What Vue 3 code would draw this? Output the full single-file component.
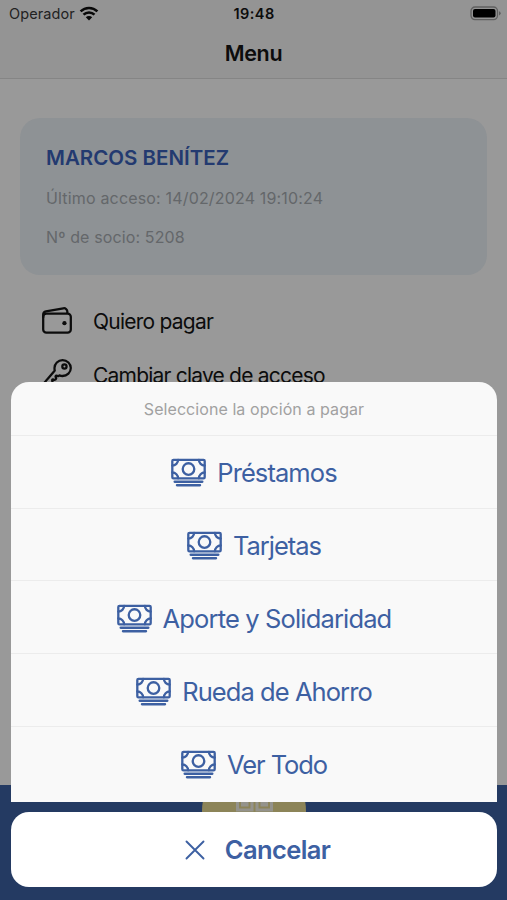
<script setup>
const options = [
  { label: 'Préstamos', key: 'loans' },
  { label: 'Tarjetas', key: 'cards' },
  { label: 'Aporte y Solidaridad', key: 'contribution' },
  { label: 'Rueda de Ahorro', key: 'savings' },
  { label: 'Ver Todo', key: 'all' },
]
</script>

<template>
  <div class="screen">
    <header class="header">
      <div class="status">
        <div class="carrier">
          <span class="carrier-name">Operador</span>
          <svg class="wifi" viewBox="0 0 20 15">
            <path d="M1.6 5.4a12 12 0 0 1 16.8 0M4.5 8.7a7.8 7.8 0 0 1 11 0" fill="none" stroke="currentColor" stroke-width="2.5" />
            <path d="M10 14.6l-3.2-3.4a4.6 4.6 0 0 1 6.4 0z" fill="currentColor" />
          </svg>
        </div>
        <span class="clock">19:48</span>
        <svg class="battery" viewBox="0 0 32 15">
          <rect x="1" y="1" width="26.5" height="12.6" rx="4" fill="none" stroke="#606060" stroke-width="1.3" />
          <rect x="3" y="3" width="22.5" height="8.6" rx="2" fill="#000" />
          <path d="M29 5.2q1.7.6 1.7 2.1T29 9.4z" fill="#606060" />
        </svg>
      </div>
      <h1 class="title">Menu</h1>
    </header>

    <main class="content">
      <section class="card">
        <h2 class="name">MARCOS BENÍTEZ</h2>
        <p class="detail access">Último acceso: 14/02/2024 19:10:24</p>
        <p class="detail member">Nº de socio: 5208</p>
      </section>
      <nav class="menu">
        <div class="menu-item">
          <svg class="menu-icon" viewBox="0 0 512 512">
            <rect x="48" y="144" width="416" height="288" rx="48" />
            <path d="M411.36 144v-30A50 50 0 00352 64.9L88.64 109.85A50 50 0 0048 159v49" />
            <circle class="dot" cx="368" cy="288" r="32" />
          </svg>
          <span class="pay">Quiero pagar</span>
        </div>
        <div class="menu-item">
          <svg class="menu-icon" viewBox="0 0 512 512">
            <path d="M218.1 167.17c0 13 0 25.6 4.1 37.4-43.1 50.6-156.9 184.3-167.5 194.5a20.17 20.17 0 00-6.7 15c0 8.5 5.2 16.7 9.6 21.3 6.6 6.9 34.8 33 40 28 15.4-15 18.5-19 24.8-25.2 9.5-9.3-1-28.3 2.3-36s6.8-9.2 12.5-10.4 15.8 2.9 23.7 3c8.3.1 12.8-3.4 19-9.2 5-4.6 8.6-8.9 8.7-15.6.2-9-12.8-20.9-3.1-30.4s23.7 6.2 34 5 22.8-15.5 24.1-21.6-11.7-21.8-9.7-30.7c.7-3 6.8-10 11.4-11s25 6.9 29.6 5.9c5.6-1.2 12.1-7.1 17.4-10.4 15.5 6.7 29.6 9.4 47.7 9.4 68.5 0 124-53.4 124-119.2S408.5 48 340 48s-121.9 53.37-121.9 119.17zM400 144a32 32 0 11-32-32 32 32 0 0132 32z" />
          </svg>
          <span class="password">Cambiar clave de acceso</span>
        </div>
      </nav>
    </main>

    <footer class="tabs">
      <div class="scan">
        <svg class="qr" viewBox="0 0 38 38">
          <g class="qr-tile">
            <rect width="17.500" height="17.500" /><rect x="19.500" width="17.500" height="17.500" />
            <rect y="19.500" width="17.500" height="17.500" /><rect x="19.500" y="19.500" width="17.500" height="17.500" />
          </g>
          <g class="qr-ring">
            <rect x="4" y="4" width="9.500" height="9.500" /><rect x="23.500" y="4" width="9.500" height="9.500" />
            <rect x="4" y="23.500" width="9.500" height="9.500" /><rect x="23.500" y="23.500" width="9.500" height="9.500" />
          </g>
        </svg>
      </div>
    </footer>

    <div class="sheet">
      <div class="group">
        <div class="sheet-title">Seleccione la opción a pagar</div>
        <div v-for="option in options" :key="option.key" class="option">
          <svg class="cash" viewBox="0 0 512 512">
            <rect x="32" y="80" width="448" height="256" rx="16" />
            <path d="M64 384h384M96 432h320" />
            <circle cx="256" cy="208" r="80" />
            <path d="M480 160a80 80 0 01-80-80M32 160a80 80 0 0080-80M480 256a80 80 0 00-80 80M32 256a80 80 0 0180 80" />
          </svg>
          <span :class="option.key">{{ option.label }}</span>
        </div>
      </div>
      <div class="cancel">
        <svg class="close" viewBox="0 0 20 20"><path d="M1.500 1.500l17 17M18.500 1.500l-17 17" /></svg>
        <span class="cancel-label">Cancelar</span>
      </div>
    </div>
  </div>
</template>

<style>
body { margin: 0; background: #999; }
</style>

<style scoped>
.screen { position: relative; display: flex; flex-direction: column; width: 507px; height: 900px; overflow: hidden; background: #999; font-family: Inter, "Liberation Sans", sans-serif; color: #0c0c0c; }
.screen span { white-space: nowrap; }
.header { box-sizing: border-box; height: 79px; background: #949494; border-bottom: 1px solid #858585; }
.status { display: grid; grid-template-columns: 1fr auto 1fr; align-items: center; height: 27px; padding: 0 5px 0 9px; }
.carrier { display: flex; align-items: center; gap: 4px; }
.carrier-name { font-size: 14.500px; color: #222; letter-spacing: 0.1px; }
.wifi { width: 20px; height: 15px; margin-top: -1px; color: #080808; }
.clock { margin-right: 3px; font-size: 14.500px; font-weight: 600; letter-spacing: 0.45px; }
.battery { width: 32px; height: 15px; justify-self: end; }
.title { margin: 0; height: 52px; line-height: 52px; text-align: center; font-size: 21.500px; font-weight: 600; letter-spacing: -0.3px; }
.content { flex: 1; padding: 39px 20px 0; }
.card { box-sizing: border-box; height: 157px; padding: 27px 26px 0; border-radius: 20px; background: #8e9295; }
.name { margin: 0; line-height: 26px; font-size: 20.500px; font-weight: 600; letter-spacing: 0; color: #233a70; }
.detail { margin: 0; line-height: 26px; font-size: 16px; letter-spacing: 0.17px; color: #64676a; }
.access { margin-top: 14px; }
.member { margin-top: 13px; letter-spacing: 0.13px; }
.menu { display: flex; flex-direction: column; padding: 19px 0 0 20px; }
.menu-item { display: flex; align-items: center; gap: 19px; height: 53.500px; font-size: 21px; }
.menu-item span { padding-top: 2px; }
.pay { letter-spacing: -0.76px; }
.password { letter-spacing: -0.79px; }
.menu-icon { width: 34px; height: 34px; fill: none; stroke: currentColor; stroke-width: 34; stroke-linejoin: round; }
.menu-icon .dot { fill: currentColor; stroke: none; }
.tabs { display: flex; justify-content: center; height: 115px; background: #243a62; }
.scan { display: flex; justify-content: center; width: 104px; height: 104px; margin-top: -26px; border-radius: 50%; background: #8c8458; }
.qr { width: 38px; height: 38px; margin: 35px 0 0 2px; }
.qr-tile { fill: #94938c; }
.qr-ring { fill: none; stroke: #8c8458; stroke-width: 1.900; }
.sheet { position: absolute; left: 11px; right: 10px; top: 382px; display: flex; flex-direction: column; gap: 10px; color: #3d60a2; }
.group { height: 420.400px; background: #f9f9f9; border-radius: 18px 18px 0 0; }
.sheet-title { box-sizing: border-box; height: 52.600px; line-height: 54px; text-align: center; font-size: 16px; letter-spacing: 0.07px; color: #a1a1a1; }
.option { box-sizing: border-box; display: flex; align-items: center; justify-content: center; gap: 10px; height: 72.950px; padding: 2px 1px 0 0; border-top: 1px solid #ececec; font-size: 25.500px; }
.cash { width: 37px; height: 37px; fill: none; stroke: currentColor; stroke-width: 32; stroke-linecap: round; stroke-linejoin: round; }
.loans { letter-spacing: -0.92px; }
.cards { letter-spacing: -1.02px; }
.contribution { letter-spacing: -0.85px; }
.savings { letter-spacing: -0.93px; }
.all { letter-spacing: -1.08px; }
.cancel { box-sizing: border-box; display: flex; align-items: center; justify-content: center; gap: 20px; height: 75px; padding-left: 7px; border-radius: 18px; background: #fff; font-size: 25.500px; font-weight: 600; }
.cancel-label { letter-spacing: -0.62px; }
.close { width: 20px; height: 20px; fill: none; stroke: currentColor; stroke-width: 1.900; stroke-linecap: round; }
</style>
